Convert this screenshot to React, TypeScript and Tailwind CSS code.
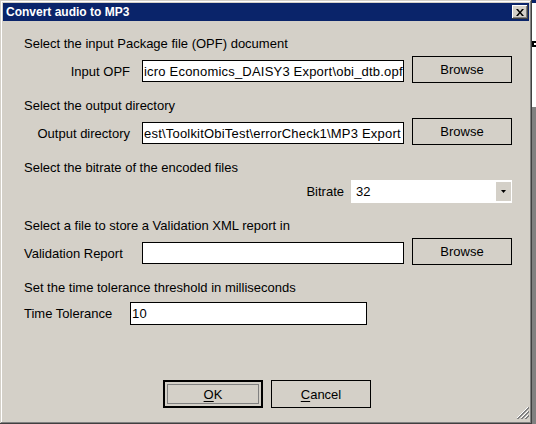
import type { ReactNode } from "react";

function FlatButton({ children, className = "" }: { children: ReactNode; className?: string }) {
  return (
    <button
      type="button"
      className={`h-[27px] w-[100px] shrink-0 border border-black bg-[#d4d0c8] text-[13px] leading-[15px] text-black ${className}`}
    >
      {children}
    </button>
  );
}

function TextBox({ value, className = "" }: { value: string; className?: string }) {
  return (
    <div
      className={`flex h-[22px] items-center overflow-hidden whitespace-nowrap border border-black bg-white pl-[1px] tracking-[0.2px] ${className}`}
    >
      {value}
    </div>
  );
}

function CloseButton() {
  return (
    <div className="mr-[1px] mt-[2px] flex h-[14px] w-[16px] items-center justify-center bg-[#d4d0c8] shadow-[inset_-1px_-1px_#404040,inset_1px_1px_#ffffff,inset_-2px_-2px_#808080]">
      <svg width="8" height="7" viewBox="0 0 8 7">
        <path d="M0 0h2l2 2.5L6 0h2L5 3.5 8 7H6L4 4.5 2 7H0l3-3.5z" fill="#000" />
      </svg>
    </div>
  );
}

function Grip() {
  return (
    <svg className="absolute bottom-[2px] right-0" width="13" height="13" viewBox="0 0 13 13">
      <path d="M12 1L1 12M12 5L5 12M12 9L9 12" stroke="#ffffff" strokeWidth="1" />
      <path d="M13 1L1 13M13 2L2 13M13 5L5 13M13 6L6 13M13 9L9 13M13 10L10 13" stroke="#808080" strokeWidth="1" />
    </svg>
  );
}

export default function App() {
  return (
    <div className="flex h-[424px] w-[536px] bg-white font-['Liberation_Sans',Arial,sans-serif] text-[13px] leading-[15px] text-black">
      {/* dialog window */}
      <div className="flex h-[424px] w-[532px] flex-col bg-[#d4d0c8] p-[3px] shadow-[inset_-1px_-1px_#404040,inset_1px_1px_#d4d0c8,inset_-2px_-2px_#808080,inset_2px_2px_#ffffff]">
        <div className="flex h-[18px] shrink-0 items-start justify-between bg-[#0a246a] pl-[3px]">
          <span className="mt-[2px] text-[12px] font-bold leading-[14px] text-white">Convert audio to MP3</span>
          <CloseButton />
        </div>

        <div className="relative flex flex-1 flex-col pl-[21px] pr-[17px] pt-[15px]">
          <p className="h-[15px]">Select the input Package file (OPF) document</p>
          <div className="mt-[5px] flex h-[27px] items-start">
            <div className="mt-[4px] flex items-center">
              <span className="w-[106px] text-right">Input OPF</span>
              <TextBox value="icro Economics_DAISY3 Export\obi_dtb.opf" className="ml-[12px] w-[262px]" />
            </div>
            <FlatButton className="ml-auto">Browse</FlatButton>
          </div>

          <p className="mt-[15px] h-[15px]">Select the output directory</p>
          <div className="mt-[5px] flex h-[27px] items-start">
            <div className="mt-[4px] flex items-center">
              <span className="w-[106px] text-right">Output directory</span>
              <TextBox value="est\ToolkitObiTest\errorCheck1\MP3 Export" className="ml-[12px] w-[262px]" />
            </div>
            <FlatButton className="ml-auto">Browse</FlatButton>
          </div>

          <p className="mt-[15px] h-[15px]">Select the bitrate of the encoded files</p>
          <div className="mt-[5px] flex h-[23px] items-center justify-end">
            <span>Bitrate</span>
            <div className="ml-[7px] flex h-[23px] w-[161px] items-center justify-between bg-white pl-[5px]">
              <span>32</span>
              <div className="mr-[1px] flex h-[19px] w-[15px] items-center justify-center bg-[#d4d0c8]">
                <svg width="5" height="3" viewBox="0 0 5 3">
                  <path d="M0 0h5L2.5 3z" fill="#000" />
                </svg>
              </div>
            </div>
          </div>

          <p className="mt-[15px] h-[15px]">Select a file to store a Validation XML report in</p>
          <div className="mt-[5px] flex h-[27px] items-start">
            <div className="mt-[4px] flex items-center">
              <span className="w-[106px]">Validation Report</span>
              <TextBox value="" className="ml-[12px] w-[262px]" />
            </div>
            <FlatButton className="ml-auto">Browse</FlatButton>
          </div>

          <p className="mt-[15px] h-[15px]">Set the time tolerance threshold in milliseconds</p>
          <div className="mt-[7px] flex items-center">
            <span className="w-[106px]">Time Tolerance</span>
            <TextBox value="10" className="h-[23px] w-[237px]" />
          </div>

          <div className="ml-[139px] mt-[55px] flex gap-[8px]">
            <button
              type="button"
              className="flex h-[28px] w-[100px] items-center justify-center border-2 border-black bg-[#d4d0c8] p-[2px]"
            >
              <span className="flex h-full w-full items-center justify-center border border-[#808080]">
                <span className="underline underline-offset-2">O</span>K
              </span>
            </button>
            <FlatButton className="h-[28px]">
              <span className="underline underline-offset-2">C</span>ancel
            </FlatButton>
          </div>

          <Grip />
        </div>
      </div>

      {/* sliver of the window behind */}
      <div className="flex w-[4px] flex-col">
        <div className="h-[3px] bg-[#0a246a]" />
        <div className="h-[38px] bg-white" />
        <div className="h-[6px] border-y-2 border-l-2 border-black bg-white" />
        <div className="h-[60px] bg-white" />
        <div className="flex-1 bg-[#808080]" />
      </div>
    </div>
  );
}
